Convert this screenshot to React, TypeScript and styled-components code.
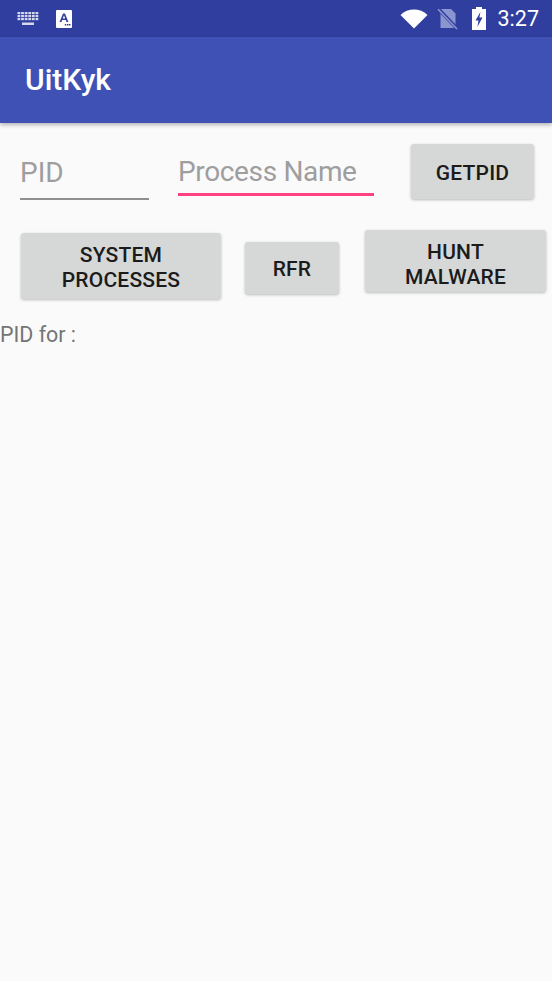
import React from 'react';
import styled, { createGlobalStyle } from 'styled-components';

const GlobalStyle = createGlobalStyle`
  html, body {
    margin: 0;
    padding: 0;
    background: #fafafa;
  }
  * {
    box-sizing: border-box;
  }
`;

const Screen = styled.div`
  width: 552px;
  height: 981px;
  overflow: hidden;
  background: #fafafa;
  font-family: Roboto, 'Noto Sans', sans-serif;
`;

const StatusBar = styled.div`
  height: 37px;
  background: #303f9f;
  display: flex;
  align-items: center;
  padding: 0 13px 0 17px;
`;

const StatusLeft = styled.div`
  display: flex;
  align-items: center;
  gap: 17px;
  flex: 1;
`;

const StatusRight = styled.div`
  display: flex;
  align-items: center;
`;

const Clock = styled.span`
  color: #fff;
  font-size: 21.5px;
  font-weight: 400;
  margin-left: 12px;
`;

const AppBar = styled.header`
  height: 86px;
  background: #3f51b5;
  display: flex;
  align-items: center;
  padding: 0 25px 2px;
  box-shadow: 0 2px 4px rgba(0, 0, 0, 0.28);
  position: relative;
`;

const Title = styled.h1`
  margin: 0;
  color: #fff;
  font-size: 30px;
  font-weight: 500;
`;

const TopRow = styled.div`
  display: flex;
  align-items: flex-start;
  padding: 21px 0 0 20px;
`;

const Field = styled.div<{ $width: number; $focused?: boolean; $gap: number }>`
  width: ${(p) => p.$width}px;
  height: ${(p) => (p.$focused ? 42 : 45)}px;
  margin-top: ${(p) => (p.$focused ? 10 : 11)}px;
  margin-right: ${(p) => p.$gap}px;
  border-bottom: ${(p) => (p.$focused ? '3px solid #ff4081' : '2px solid #8f8f8f')};
  color: #9e9e9e;
  font-size: 28px;
  letter-spacing: ${(p) => (p.$focused ? '-0.35px' : '0')};
  line-height: 36px;
  white-space: nowrap;
`;

const Button = styled.button<{ $width: number; $height: number; $top?: number; $gap?: number; $drop?: number }>`
  width: ${(p) => p.$width}px;
  height: ${(p) => p.$height}px;
  margin-top: ${(p) => p.$top ?? 0}px;
  margin-right: ${(p) => p.$gap ?? 0}px;
  flex: none;
  border: 0;
  border-radius: 3px;
  padding: ${(p) => p.$drop ?? 2}px 0 0;
  background: #d6d7d7;
  color: #1b1b1b;
  font-family: inherit;
  font-size: 21px;
  font-weight: 500;
  line-height: 25px;
  letter-spacing: 0.2px;
  text-align: center;
  box-shadow: 0 1px 3px rgba(0, 0, 0, 0.26);
`;

const ButtonRow = styled.div`
  display: flex;
  align-items: flex-start;
  padding: 30px 0 0 21px;
`;

const Result = styled.p`
  margin: 23px 0 0;
  color: #757575;
  font-size: 21.4px;
  line-height: 26px;
`;

const KeyboardIcon = () => (
  <svg width="22" height="14" viewBox="0 0 22 14">
    <g fill="#d5d8ee">
      {[0, 1, 2].map((r) =>
        [0, 1, 2, 3, 4, 5].map((c) => (
          <rect key={`${r}-${c}`} x={0.5 + c * 3.6} y={r * 3} width="2.8" height="2.2" />
        ))
      )}
      <rect x="5" y="10.5" width="12" height="2.5" />
    </g>
  </svg>
);

const ImeIcon = () => (
  <svg width="16" height="18" viewBox="0 0 16 18">
    <rect width="16" height="18" rx="1" fill="#fff" />
    <path d="M3.6 12 L7 3.5 H9 L12.4 12 H10.5 L9.8 10 H6.2 L5.5 12 Z M6.8 8.4 H9.2 L8 5.2 Z" fill="#303f9f" fillRule="evenodd" />
    <rect x="8.8" y="14" width="1.5" height="1.5" fill="#303f9f" />
    <rect x="11" y="14" width="1.5" height="1.5" fill="#303f9f" />
    <rect x="13" y="14" width="1.5" height="1.5" fill="#303f9f" />
  </svg>
);

const WifiIcon = () => (
  <svg width="28" height="20" viewBox="0 0 28 20">
    <path d="M0.5 6 C8 -1.2 20 -1.2 27.5 6 L14 19.5 Z" fill="#fff" />
  </svg>
);

const NoSimIcon = () => (
  <svg width="21" height="22" viewBox="0 0 21 22" style={{ marginLeft: 9 }}>
    <path d="M3.5 1 H14 L18.5 5.5 V20 H3.5 Z" fill="#8b95d0" />
    <path d="M1 0.5 L20 20.5" stroke="#303f9f" strokeWidth="3.5" />
    <path d="M1 1.2 L20 21" stroke="#8b95d0" strokeWidth="1.6" />
  </svg>
);

const BatteryIcon = () => (
  <svg width="14" height="23" viewBox="0 0 14 23" style={{ marginLeft: 14 }}>
    <path d="M4 0 H10 V2 H14 V23 H0 V2 H4 Z" fill="#fff" />
    <path d="M8.4 5 L3.5 13.5 H6.5 L5.4 20 L10.5 10.5 H7.4 Z" fill="#303f9f" />
  </svg>
);

export default function App() {
  return (
    <Screen>
      <GlobalStyle />
      <StatusBar>
        <StatusLeft>
          <KeyboardIcon />
          <ImeIcon />
        </StatusLeft>
        <StatusRight>
          <WifiIcon />
          <NoSimIcon />
          <BatteryIcon />
          <Clock>3:27</Clock>
        </StatusRight>
      </StatusBar>
      <AppBar>
        <Title>UitKyk</Title>
      </AppBar>
      <TopRow>
        <Field $width={129} $gap={29}>PID</Field>
        <Field $width={196} $gap={37} $focused>Process Name</Field>
        <Button $width={123} $height={55} $drop={3}>GETPID</Button>
      </TopRow>
      <ButtonRow>
        <Button $width={200} $height={66} $top={3} $gap={24} $drop={4}>SYSTEM<br />PROCESSES</Button>
        <Button $width={94} $height={52} $top={12} $gap={26} $drop={3}>RFR</Button>
        <Button $width={181} $height={62} $drop={7}>HUNT<br />MALWARE</Button>
      </ButtonRow>
      <Result>PID for :</Result>
    </Screen>
  );
}
